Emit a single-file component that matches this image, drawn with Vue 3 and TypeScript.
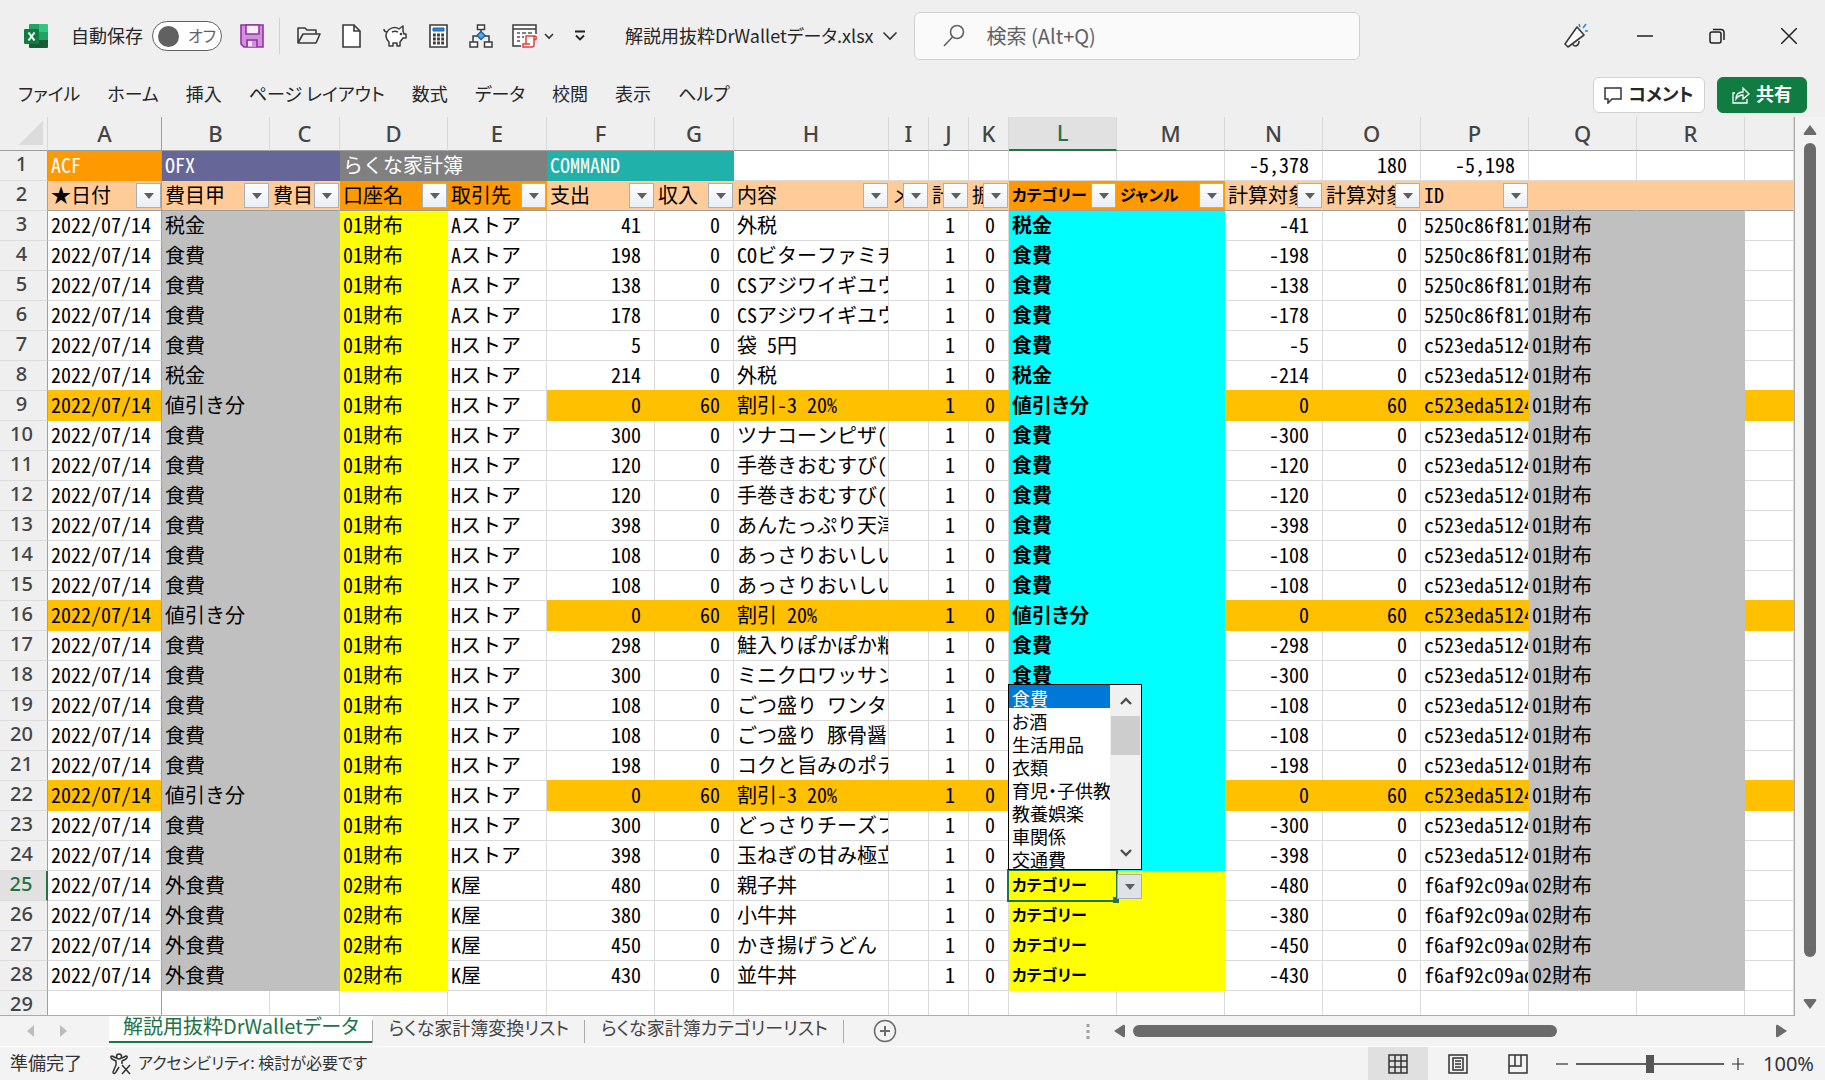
<script setup lang="ts">
import { ref } from 'vue'

interface Cell {
  text: string
  kind: string
}

interface Row {
  no: number
  cells: Cell[]
}

const letters = 'ABCDEFGHIJKLMNOPQRS'.split('')
const menus = ['ファイル', 'ホーム', '挿入', 'ページ レイアウト', '数式', 'データ', '校閲', '表示', 'ヘルプ']
const sheets = ['解説用抜粋DrWalletデータ', 'らくな家計簿変換リスト', 'らくな家計簿カテゴリーリスト']
const choices = ['食費', 'お酒', '生活用品', '衣類', '育児・子供教育', '教養娯楽', '車関係', '交通費']

const titles: Cell[] = letters.map((l) => {
  const text: Record<string, string> = { A: 'ACF', B: 'OFX', D: 'らくな家計簿', F: 'COMMAND', N: '-5,378', O: '180', P: '-5,198' }
  const kind: Record<string, string> = {
    A: 'deep', B: 'indigo', C: 'indigo', D: 'slate', E: 'slate', F: 'teal', G: 'teal', N: 'num', O: 'num', P: 'num',
  }
  return { text: text[l] ?? '', kind: kind[l] ?? '' }
})

const heads = [
  '★日付', '費目甲', '費目', '口座名', '取引先', '支出', '収入', '内容', 'メ', '計', '振',
  'カテゴリー', 'ジャンル', '計算対象', '計算対象', 'ID', '', '', '',
]

function headKind(i: number): string {
  const l = letters[i]
  if (l === 'L' || l === 'M') return 'deep strong kana'
  return l === 'D' || l === 'E' ? 'deep' : 'peach'
}

type Entry = [cat: string, shop: string, out: number, back: number, item: string, id: string]

const idA = '5250c86f812'
const idB = 'c523eda5124'
const idC = 'f6af92c09ad'

const entries: Entry[] = [
  ['税金', 'Aストア', 41, 0, '外税', idA],
  ['食費', 'Aストア', 198, 0, 'COビターファミチ', idA],
  ['食費', 'Aストア', 138, 0, 'CSアジワイギユウ', idA],
  ['食費', 'Aストア', 178, 0, 'CSアジワイギユウ', idA],
  ['食費', 'Hストア', 5, 0, '袋 5円', idB],
  ['税金', 'Hストア', 214, 0, '外税', idB],
  ['値引き分', 'Hストア', 0, 60, '割引-3 20%', idB],
  ['食費', 'Hストア', 300, 0, 'ツナコーンピザ(', idB],
  ['食費', 'Hストア', 120, 0, '手巻きおむすび(', idB],
  ['食費', 'Hストア', 120, 0, '手巻きおむすび(', idB],
  ['食費', 'Hストア', 398, 0, 'あんたっぷり天津', idB],
  ['食費', 'Hストア', 108, 0, 'あっさりおいしい', idB],
  ['食費', 'Hストア', 108, 0, 'あっさりおいしい', idB],
  ['値引き分', 'Hストア', 0, 60, '割引 20%', idB],
  ['食費', 'Hストア', 298, 0, '鮭入りぽかぽか粕', idB],
  ['食費', 'Hストア', 300, 0, 'ミニクロワッサン', idB],
  ['食費', 'Hストア', 108, 0, 'ごつ盛り ワンタ', idB],
  ['食費', 'Hストア', 108, 0, 'ごつ盛り 豚骨醤', idB],
  ['食費', 'Hストア', 198, 0, 'コクと旨みのポテ', idB],
  ['値引き分', 'Hストア', 0, 60, '割引-3 20%', idB],
  ['食費', 'Hストア', 300, 0, 'どっさりチーズフ', idB],
  ['食費', 'Hストア', 398, 0, '玉ねぎの甘み極立', idB],
  ['外食費', 'K屋', 480, 0, '親子丼', idC],
  ['外食費', 'K屋', 380, 0, '小牛丼', idC],
  ['外食費', 'K屋', 450, 0, 'かき揚げうどん', idC],
  ['外食費', 'K屋', 430, 0, '並牛丼', idC],
]

const rows: Row[] = entries.map(([cat, shop, out, back, item, id], i) => {
  const second = id === idC
  const purse = second ? '02財布' : '01財布'
  const mark = back > 0 ? ' amber' : ''
  const pick = second ? 'yellow strong kana' : 'cyan strong'
  const texts = [
    '2022/07/14', cat, '', purse, shop, String(out), String(back), item, '', '1', '0',
    second ? 'カテゴリー' : cat, '', out ? `-${out}` : '0', String(back), id, purse, '', '',
  ]
  const kinds = [
    mark, 'gray', 'gray', 'yellow', '', 'num' + mark, 'num' + mark, mark, mark, 'num' + mark, 'num' + mark,
    pick, pick, 'num' + mark, 'num' + mark, mark, 'gray', 'gray', mark,
  ]
  return { no: i + 3, cells: texts.map((text, c) => ({ text, kind: kinds[c] })) }
})

const chosen = ref('食費')
const zoom = ref(50)
const autosave = ref(false)
</script>

<template>
  <div class="app">
    <header class="titlebar">
      <svg class="logo" width="24" height="24" viewBox="0 0 24 24" aria-label="Excel">
        <path d="M6 0h9v8H5V1a1 1 0 0 1 1-1z" fill="#21a366" />
        <path d="M15 0h8a1 1 0 0 1 1 1v7h-9z" fill="#33c481" />
        <path d="M5 8h10v8H5z" fill="#107c41" />
        <path d="M15 8h9v8h-9z" fill="#21a366" />
        <path d="M5 16h19v7a1 1 0 0 1-1 1H6a1 1 0 0 1-1-1z" fill="#185c37" />
        <path d="M15 16h9v0h-9z" fill="#107c41" />
        <rect x="0" y="5" width="15" height="15" rx="1" fill="#107c41" />
        <path d="M4.500 8.500l6 8M10.500 8.500l-6 8" stroke="#fff" stroke-width="2" />
      </svg>
      <label class="autosave">
        <span class="lift">自動保存</span>
        <input v-model="autosave" class="sr" type="checkbox" />
        <span class="toggle"><i></i><span class="lift">オフ</span></span>
      </label>
      <button class="tool save" aria-label="上書き保存">
        <svg width="24" height="24" viewBox="0 0 24 24" fill="none" stroke="#9331a5" stroke-width="1.600">
          <path d="M1 1h22v22H4l-3-3z" fill="#d390dd" />
          <path d="M6 1h13v9H6z" fill="#f5f0f6" />
          <path d="M7 23v-7h10v7" fill="#d390dd" />
          <path d="M8 17h4v5H8z" fill="#f5f0f6" stroke="none" />
        </svg>
      </button>
      <span class="rule"></span>
      <div class="tools">
        <button class="tool" aria-label="開く">
          <svg width="24" height="24" viewBox="0 0 24 24" fill="none" stroke="#3b3b3b" stroke-width="1.600" stroke-linejoin="round">
            <path d="M1 19V4h7l2 2h9v4M1 19l5-9h17l-4 9z" />
          </svg>
        </button>
        <button class="tool" aria-label="新規">
          <svg width="24" height="24" viewBox="0 0 24 24" fill="#fff" stroke="#3b3b3b" stroke-width="1.600">
            <path d="M3 1h11l6 6v16H3zM14 1v6h6" />
          </svg>
        </button>
        <button class="tool" aria-label="貯金">
          <svg width="24" height="24" viewBox="0 0 24 24" fill="#fff" stroke="#3b3b3b" stroke-width="1.500" stroke-linejoin="round">
            <path d="M4 8c2-4 8-6 12-3l4-3v5l1 3h2v4h-3l-3 4v4h-3v-3h-4v3H6v-4c-3-3-4-6-2-10z" />
            <path d="M4 8C2 8 1 7 1 5M9 8c2-1 4-1 6 0" />
            <circle cx="18" cy="10" r=".6" fill="#3b3b3b" />
          </svg>
        </button>
        <button class="tool" aria-label="電卓">
          <svg width="24" height="24" viewBox="0 0 24 24" fill="none" stroke="#3b3b3b">
            <path d="M4 1h17v22H4z" fill="#fff" stroke-width="1.600" />
            <path d="M7 4h11v3H7z" fill="#2b88d8" stroke="#1565a9" stroke-width="1" />
            <path d="M7 11h11M7 15h11M7 19h11" stroke-width="2.800" stroke-dasharray="2.800 1.300" />
          </svg>
        </button>
        <button class="tool" aria-label="組織図">
          <svg width="24" height="24" viewBox="0 0 24 24" fill="#fff" stroke="#3b3b3b" stroke-width="1.500">
            <path d="M12 5v3M4 18v-6h5M20 18v-6h-5" fill="none" />
            <path d="M8.500 1h7v4.500h-7zM1 18h7.500v5H1zM15.500 18H23v5h-7.500z" />
            <path d="M12 7.500l4 4-4 4-4-4z" fill="#5aa9e6" stroke="#1565a9" />
          </svg>
        </button>
        <button class="tool wide" aria-label="マクロ">
          <svg width="26" height="26" viewBox="0 0 26 26" fill="none" stroke="#3b3b3b" stroke-width="1.500">
            <path d="M9 23H1V2h23v9" fill="#fff" />
            <path d="M1 6h23" />
            <path d="M5 10h3M10 10h4M16 10h4M5 14h3M10 14h2M5 18h3" stroke="#555" />
            <path d="M14 13h8v9a2 2 0 0 1-2 2h-9v-3h3zM22 13c3 0 3 4 0 4M11 21h7" fill="#fff" stroke="#e2403a" />
          </svg>
          <svg width="10" height="8" viewBox="0 0 10 8" fill="none" stroke="#333" stroke-width="1.600"><path d="M1 2l4 4 4-4" /></svg>
        </button>
        <button class="tool small" aria-label="クイック アクセス ツール バーのユーザー設定">
          <svg width="14" height="12" viewBox="0 0 14 12" fill="none" stroke="#222" stroke-width="1.800"><path d="M2 1.500h10M3 5.500l4 4 4-4" /></svg>
        </button>
      </div>
      <button class="filename">
        <span class="lift">解説用抜粋DrWalletデータ.xlsx</span>
        <svg width="16" height="10" viewBox="0 0 16 10" fill="none" stroke="#333" stroke-width="1.600"><path d="M1.500 1.500L8 8l6.500-6.500" /></svg>
      </button>
      <label class="search">
        <svg width="24" height="24" viewBox="0 0 24 24" fill="none" stroke="#616161" stroke-width="1.600">
          <circle cx="14" cy="8" r="6.500" />
          <path d="M9.500 13L1 22" />
        </svg>
        <input type="text" placeholder="検索 (Alt+Q)" aria-label="検索" />
      </label>
      <button class="tool news" aria-label="新機能">
        <svg width="26" height="26" viewBox="0 0 26 26" fill="none" stroke="#3b3b3b" stroke-width="1.600" stroke-linejoin="round">
          <path d="M14 4l7 8L5 24l-3-3z" fill="#fff" />
          <path d="M10 21c0 3 6 3 6-3" />
          <path d="M17 4l-1-3M20 5l3-4M22 8h3" stroke="#2b88d8" />
        </svg>
      </button>
      <div class="winbtns">
        <button class="tool" aria-label="最小化">
          <svg width="16" height="16" viewBox="0 0 16 16" stroke="#222" stroke-width="1.500"><path d="M0 8h16" /></svg>
        </button>
        <button class="tool" aria-label="元に戻す">
          <svg width="16" height="16" viewBox="0 0 16 16" fill="none" stroke="#222" stroke-width="1.500">
            <rect x="1" y="4" width="11" height="11" rx="2" />
            <path d="M4 1.500h8A3 3 0 0 1 15 4v8" />
          </svg>
        </button>
        <button class="tool" aria-label="閉じる">
          <svg width="16" height="16" viewBox="0 0 16 16" stroke="#222" stroke-width="1.500"><path d="M0 0l16 16M16 0L0 16" /></svg>
        </button>
      </div>
    </header>

    <nav class="menubar">
      <button v-for="m in menus" :key="m" class="menu">{{ m }}</button>
      <span class="grow"></span>
      <button class="act">
        <svg width="18" height="18" viewBox="0 0 18 18" fill="none" stroke="#333" stroke-width="1.500"><path d="M1 2h16v11H8l-4 4v-4H1z" /></svg>
        <span class="lift">コメント</span>
      </button>
      <button class="act share">
        <svg width="18" height="18" viewBox="0 0 18 18" fill="none" stroke="#fff" stroke-width="1.300">
          <path d="M3 7H1v10h14v-4" />
          <path d="M4 13c0-4 2-7 7-7V2l6 6-6 5V9c-3 0-5 1-7 4z" />
        </svg>
        <span class="lift">共有</span>
      </button>
    </nav>

    <main class="sheet">
      <div class="grid">
        <table>
          <colgroup>
            <col class="w-no" />
            <col v-for="l in letters" :key="l" :class="'w-' + l" />
          </colgroup>
          <thead>
            <tr class="letters">
              <th class="corner"><i></i></th>
              <th v-for="l in letters" :key="l" scope="col" :class="{ on: l === 'L', frozen: l === 'A' }">{{ l === 'S' ? '' : l }}</th>
            </tr>
          </thead>
          <tbody>
            <tr>
              <th scope="row">1</th>
              <td v-for="(c, i) in titles" :key="i" :class="[c.kind, { frozen: i === 0 }]">
                <div class="clip spill">{{ c.text }}</div>
              </td>
            </tr>
            <tr class="filters">
              <th scope="row">2</th>
              <td v-for="(h, i) in heads" :key="i" :class="[headKind(i), { frozen: i === 0 }]">
                <div class="head">
                  <span>{{ h }}</span>
                  <button v-if="h" class="drop" :aria-label="h + ' フィルター'"></button>
                </div>
              </td>
            </tr>
            <tr v-for="r in rows" :key="r.no">
              <th scope="row" :class="{ on: r.no === 25 }">{{ r.no }}</th>
              <td v-for="(c, i) in r.cells" :key="i" :class="[c.kind, { frozen: i === 0, active: r.no === 25 && i === 11 }]">
                <div class="clip">{{ c.text }}</div>
                <template v-if="r.no === 25 && i === 11">
                  <span class="ring"></span>
                  <button class="drop open" aria-label="リストを開く"></button>
                  <div class="picker">
                    <select v-model="chosen" size="8" aria-label="カテゴリー">
                      <option v-for="o in choices" :key="o" :value="o">{{ o }}</option>
                    </select>
                    <div class="bar">
                      <svg width="14" height="10" viewBox="0 0 14 10" fill="none" stroke="#505050" stroke-width="2.400"><path d="M2 8l5-5 5 5" /></svg>
                      <i></i>
                      <svg width="14" height="10" viewBox="0 0 14 10" fill="none" stroke="#505050" stroke-width="2.400"><path d="M2 2l5 5 5-5" /></svg>
                    </div>
                  </div>
                </template>
              </td>
            </tr>
            <tr>
              <th scope="row">29</th>
              <td v-for="(l, i) in letters" :key="l" :class="{ frozen: i === 0 }"></td>
            </tr>
          </tbody>
        </table>
      </div>
      <div class="vscroll">
        <svg width="14" height="10" viewBox="0 0 14 10"><path d="M7 0l6 8q1 2-1 2H2q-2 0-1-2z" fill="#6b6b6b" /></svg>
        <i></i>
        <svg width="14" height="10" viewBox="0 0 14 10"><path d="M7 10l6-8q1-2-1-2H2Q0 0 1 2z" fill="#6b6b6b" /></svg>
      </div>
    </main>

    <div class="tabbar">
      <div class="arrows">
        <svg width="8" height="12" viewBox="0 0 8 12"><path d="M7 0v12L0 6z" fill="#bdbdbd" /></svg>
        <svg width="8" height="12" viewBox="0 0 8 12"><path d="M1 0v12l7-6z" fill="#bdbdbd" /></svg>
      </div>
      <button v-for="(s, i) in sheets" :key="s" class="tab" :class="{ current: i === 0 }">{{ s }}</button>
      <button class="tool add" aria-label="新しいシート">
        <svg width="24" height="24" viewBox="0 0 24 24" fill="none" stroke="#6b6b6b" stroke-width="1.500">
          <circle cx="12" cy="12" r="10.500" />
          <path d="M12 7v10M7 12h10" stroke-width="2" />
        </svg>
      </button>
      <span class="grow"></span>
      <svg class="dots" width="4" height="16" viewBox="0 0 4 16" fill="#a0a0a0"><path d="M.5 0h3v3h-3zM.5 6h3v3h-3zM.5 12h3v3h-3z" /></svg>
      <div class="hscroll">
        <svg width="12" height="14" viewBox="0 0 12 14"><path d="M0 7l9-6q2-1 2 1v10q0 2-2 1z" fill="#6b6b6b" /></svg>
        <i></i>
        <span class="grow"></span>
        <svg width="12" height="14" viewBox="0 0 12 14"><path d="M11 7L2 1Q0 0 0 2v10q0 2 2 1z" fill="#6b6b6b" /></svg>
      </div>
    </div>

    <footer class="status">
      <span class="lift">準備完了</span>
      <button class="access">
        <svg width="22" height="22" viewBox="0 0 22 22" fill="none" stroke="#333" stroke-width="1.500" stroke-linejoin="round">
          <circle cx="9" cy="3.500" r="2.500" />
          <path d="M6 5L2 3C0 3 1 5 2 6l4 2v4l-3 7c0 2 2 2 3 0l3-5M12 5l4-2c2 0 1 2 0 3l-4 2v3" />
          <path d="M12 12l8 9M20 12l-8 9" />
        </svg>
        <span class="lift">アクセシビリティ: 検討が必要です</span>
      </button>
      <span class="grow"></span>
      <button class="view current" aria-label="標準">
        <svg width="20" height="20" viewBox="0 0 20 20" fill="none" stroke="#333" stroke-width="1.500"><path d="M1 1h18v18H1zM7 1v18M13 1v18M1 7h18M1 13h18" /></svg>
      </button>
      <button class="view" aria-label="ページ レイアウト">
        <svg width="20" height="20" viewBox="0 0 20 20" fill="none" stroke="#333" stroke-width="1.500"><path d="M1 1h18v18H1zM5 4h10v12H5zM7 7h6M7 10h6M7 13h6" /></svg>
      </button>
      <button class="view" aria-label="改ページ プレビュー">
        <svg width="20" height="20" viewBox="0 0 20 20" fill="none" stroke="#333" stroke-width="1.500"><path d="M1 1h18v18H1zM1 12h12V1M7 1v11" /></svg>
      </button>
      <div class="zoom">
        <button class="tool" aria-label="縮小"><svg width="12" height="12" viewBox="0 0 12 12" stroke="#333" stroke-width="1.200"><path d="M0 6h12" /></svg></button>
        <input v-model="zoom" type="range" min="0" max="100" aria-label="ズーム" />
        <button class="tool" aria-label="拡大"><svg width="12" height="12" viewBox="0 0 12 12" stroke="#333" stroke-width="1.200"><path d="M0 6h12M6 0v12" /></svg></button>
        <span class="pct">100%</span>
      </div>
    </footer>
  </div>
</template>

<style>
body {
  margin: 0;
}
</style>

<style scoped>
.app {
  --ui: 'Noto Sans CJK JP', sans-serif;
  --mono: 'Noto Sans Mono CJK JP', 'Noto Sans CJK JP', monospace;
  --green: #217346;
  display: flex;
  flex-direction: column;
  height: 100vh;
  overflow: hidden;
  background: #efefef;
  color: #262626;
  font-family: var(--ui);
  font-size: 18px;
  font-feature-settings: 'palt';
}

button,
input,
select {
  margin: 0;
  padding: 0;
  border: 0;
  background: none;
  color: inherit;
  font: inherit;
  font-feature-settings: inherit;
}

svg {
  display: block;
  flex: none;
}

.grow {
  flex: 1;
}

/* optical centring of Japanese text beside icons */
.lift {
  padding-bottom: 3px;
}

.sr {
  position: absolute;
  opacity: 0;
}

.tool {
  display: flex;
  align-items: center;
  justify-content: center;
}

/* title bar */
.titlebar {
  display: flex;
  align-items: center;
  height: 72px;
  padding: 0 28px 0 24px;
}

.autosave {
  display: flex;
  align-items: center;
  gap: 9px;
  margin-left: 23px;
}

.toggle {
  display: flex;
  align-items: center;
  gap: 9px;
  box-sizing: border-box;
  width: 70px;
  height: 30px;
  padding-left: 5px;
  border: 1px solid #616161;
  border-radius: 15px;
  background: #fff;
  color: #616161;
  font-size: 16px;
}

.toggle i {
  width: 21px;
  height: 21px;
  border-radius: 50%;
  background: #616161;
}

.save {
  margin-left: 18px;
}

.rule {
  width: 1px;
  height: 36px;
  margin: 0 17px 0 15px;
  background: #d0d0d0;
}

.tools {
  display: flex;
  align-items: center;
  gap: 19px;
}

.wide {
  gap: 6px;
}

.filename {
  display: flex;
  align-items: center;
  gap: 8px;
  margin-left: 38px;
  white-space: nowrap;
}

.search {
  display: flex;
  flex: 0 1 446px;
  align-items: center;
  gap: 20px;
  box-sizing: border-box;
  height: 48px;
  margin-left: 16px;
  padding: 0 28px;
  border: 1px solid #d1d1d1;
  border-radius: 6px;
  background: #fafafa;
}

.search input {
  flex: 1;
  min-width: 0;
  padding-bottom: 2px;
  font-size: 20px;
  outline: 0;
}

.search input::placeholder {
  color: #616161;
  opacity: 1;
}

.news {
  margin: 0 48px 0 auto;
}

.winbtns {
  display: flex;
  align-items: center;
  gap: 56px;
}

/* menu bar */
.menubar {
  display: flex;
  align-items: center;
  height: 45px;
  padding: 0 18px;
}

.menu {
  margin-right: 27px;
  padding-bottom: 3px;
  white-space: nowrap;
}

.act {
  display: flex;
  align-items: center;
  justify-content: center;
  gap: 6px;
  box-sizing: border-box;
  width: 112px;
  height: 36px;
  border: 1px solid #d1d1d1;
  border-radius: 6px;
  background: #fff;
  font-weight: 700;
  white-space: nowrap;
}

.share {
  width: 90px;
  margin-left: 12px;
  border-color: #107c41;
  background: #107c41;
  color: #fff;
}

/* sheet */
.sheet {
  display: flex;
  flex: 1;
  min-height: 0;
}

.grid {
  flex: 1;
  min-width: 0;
  overflow: hidden;
  box-sizing: border-box;
  border-right: 1px solid #ababab;
  border-bottom: 1px solid #ababab;
}

table {
  width: 100%;
  table-layout: fixed;
  border-collapse: separate;
  border-spacing: 0;
  font-family: var(--mono);
  font-size: 20px;
  color: #000;
}

.w-no { width: 48px; }
.w-A { width: 114px; }
.w-B, .w-D, .w-F, .w-L, .w-M, .w-P, .w-Q, .w-R { width: 108px; }
.w-C { width: 70px; }
.w-E { width: 99px; }
.w-N, .w-O { width: 98px; }
.w-G { width: 79px; }
.w-H { width: 155px; }
.w-I, .w-J, .w-K { width: 40px; }

th,
td {
  box-sizing: border-box;
  height: 30px;
  padding: 0;
  line-height: 27px;
  white-space: nowrap;
}

th {
  padding: 0 4px 3px 0;
  border-right: 1px solid #9e9e9e;
  border-bottom: 1px solid #dcdcdc;
  background: #efefef;
  color: #444;
  font-family: 'Noto Sans', sans-serif;
  font-weight: 500;
  line-height: 26px;
}

th.on {
  border-right: 2px solid var(--green);
  background: #e1e1e1;
  color: var(--green);
}

.letters th {
  height: 33px;
  padding: 0 0 2px;
  border-right: 1px solid #d8d8d8;
  border-bottom: 1px solid #9e9e9e;
  font-size: 22px;
  line-height: 30px;
}

.letters .on {
  border-bottom: 2px solid var(--green);
}

.letters .frozen {
  border-right-color: #9e9e9e;
}

.corner i {
  display: block;
  margin: 0 4px 0 19px;
  height: 25px;
  background: linear-gradient(to bottom right, transparent 50%, #dcdcdc 50%);
}

td {
  border-right: 1px solid #dadada;
  border-bottom: 1px solid #dadada;
  background: #fff;
}

.clip {
  height: 29px;
  padding-left: 3px;
  overflow: hidden;
}

.spill {
  overflow: visible;
}

.num .clip {
  padding: 0 13px 0 0;
  text-align: right;
}

.deep { border-color: #f90; background: #f90; }
.peach { border-color: #fc9; background: #fc9; }
.indigo { border-color: #669; background: #669; color: #fff; }
.slate { border-color: #808080; background: #808080; color: #fff; }
.teal { border-color: #20b2aa; background: #20b2aa; color: #fff; }
.gray { border-color: #c0c0c0; background: #c0c0c0; }
.yellow { border-color: #ff0; background: #ff0; }
.cyan { border-color: #0ff; background: #0ff; }
.amber { border-color: #ffc000; background: #ffc000; box-shadow: 0 -1px 0 #ffc000; }

tr:not(.filters) .deep {
  color: #fff;
}

.slate .spill {
  position: relative;
  z-index: 1;
}

.strong {
  font-family: var(--ui);
  font-weight: 700;
}

.kana {
  font-size: 16px;
}

.frozen {
  border-right-color: #9e9e9e;
}

.filters td {
  border-bottom-color: #9e9e9e;
}

.head {
  display: flex;
  align-items: center;
  height: 29px;
  padding-left: 3px;
}

.head span {
  flex: 1;
  min-width: 0;
  padding-bottom: 2px;
  overflow: hidden;
}

.drop {
  display: flex;
  flex: none;
  align-items: center;
  justify-content: center;
  box-sizing: border-box;
  width: 25px;
  height: 25px;
  border: 1px solid #a9b0b8;
  background: linear-gradient(#fff, #e9eef4);
}

.drop::after {
  content: '';
  border: 5px solid transparent;
  border-top: 6px solid #5f5f5f;
  border-bottom: 0;
}

.active {
  position: relative;
}

.ring {
  position: absolute;
  inset: -2px -2px -2px -2px;
  border: 2px solid var(--green);
}

.ring::after {
  content: '';
  position: absolute;
  right: -3px;
  bottom: -3px;
  width: 6px;
  height: 6px;
  background: var(--green);
}

.open {
  position: absolute;
  top: 3px;
  left: 108px;
  background: #dfe3e8;
}

.picker {
  position: absolute;
  z-index: 3;
  bottom: 30px;
  left: -1px;
  display: flex;
  box-sizing: border-box;
  width: 134px;
  height: 186px;
  border: 1px solid #000;
  background: #fff;
}

.picker select {
  flex: 1;
  min-width: 0;
  height: 184px;
  overflow: hidden;
  border-radius: 0;
  outline: 0;
  color: #000;
  font-size: 18px;
  font-weight: 400;
  scrollbar-width: none;
}

.picker option {
  box-sizing: border-box;
  height: 23px;
  min-height: 23px;
  padding: 0 0 2px 3px;
  line-height: 21px;
}

.picker option:checked {
  background: #0078d7 linear-gradient(#0078d7, #0078d7);
  color: #fff;
}

.bar {
  display: flex;
  flex-direction: column;
  align-items: center;
  box-sizing: border-box;
  width: 31px;
  padding: 11px 1px;
  background: #f0f0f0;
}

.bar i {
  width: 29px;
  height: 39px;
  margin: 10px 0 auto;
  background: #cdcdcd;
}

.vscroll {
  display: flex;
  flex-direction: column;
  align-items: center;
  gap: 8px;
  box-sizing: border-box;
  width: 30px;
  padding: 8px 0 7px;
  background: #f3f3f3;
}

.vscroll i {
  flex: 1;
  width: 12px;
  margin-bottom: 34px;
  border-radius: 6px;
  background: #6b6b6b;
}

/* sheet tabs */
.tabbar {
  display: flex;
  align-items: flex-start;
  height: 30px;
  border-bottom: 1px solid #fff;
  background: #f3f3f3;
}

.arrows {
  display: flex;
  gap: 24px;
  box-sizing: border-box;
  width: 109px;
  padding: 9px 27px;
}

.tab {
  position: relative;
  height: 27px;
  padding: 0 16px 5px;
  color: #444;
  line-height: 20px;
  white-space: nowrap;
}

.tab::after {
  content: '';
  position: absolute;
  top: 4px;
  right: 0;
  width: 1px;
  height: 23px;
  background: #ababab;
}

.current.tab {
  padding: 0 14px 5px;
  border-bottom: 2px solid var(--green);
  background: #fff;
  color: var(--green);
  font-size: 20px;
}

.add {
  margin: 3px 0 0 29px;
}

.dots {
  margin: 8px 24px 0 0;
}

.hscroll {
  display: flex;
  flex: 0 0 674px;
  align-items: center;
  height: 30px;
  margin-right: 37px;
}

.hscroll i {
  width: 424px;
  height: 12px;
  margin-left: 7px;
  border-radius: 6px;
  background: #6b6b6b;
}

/* status bar */
.status {
  display: flex;
  align-items: center;
  height: 33px;
  padding: 0 12px 0 10px;
  background: #f3f3f3;
  color: #333;
}

.access {
  display: flex;
  align-items: center;
  gap: 6px;
  margin-left: 28px;
  font-size: 16px;
  white-space: nowrap;
}

.view {
  display: flex;
  align-items: center;
  justify-content: center;
  width: 60px;
  height: 33px;
}

.view.current {
  background: #e0e0e0;
}

.zoom {
  display: flex;
  align-items: center;
  gap: 8px;
  margin-left: 8px;
}

.zoom input {
  width: 148px;
  height: 20px;
  appearance: none;
  background: linear-gradient(#616161, #616161) center / 100% 2px no-repeat;
}

.zoom input::-webkit-slider-thumb {
  width: 8px;
  height: 18px;
  appearance: none;
  background: #555;
}

.pct {
  width: 50px;
  margin-left: 11px;
  font-family: 'Noto Sans', sans-serif;
  font-size: 20px;
}
</style>
